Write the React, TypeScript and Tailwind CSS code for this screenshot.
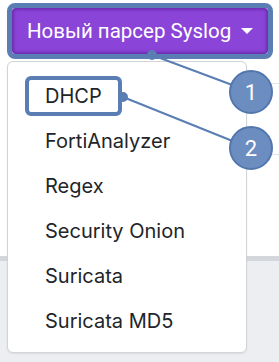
const items = ["DHCP", "FortiAnalyzer", "Regex", "Security Onion", "Suricata", "Suricata MD5"];

export default function App() {
  return (
    <div className="relative w-[279px] h-[362px] overflow-hidden bg-white font-['Inter',sans-serif]">
      {/* page behind */}
      <div className="flex flex-col h-full">
        <div className="h-[256px] flex flex-col">
          <div className="h-[84px] border-b border-[#e3e5e8] ml-[246px]" />
          <div className="h-[71px] border-b border-[#e3e5e8] ml-[246px]" />
        </div>
        <div className="flex-1 border-t-[5px] border-[#d3d6da] bg-[#eceef2]" />
      </div>

      {/* button */}
      <div className="absolute left-[7px] top-[3px] rounded-[8px] border-[5px] border-[#5a7eb3]">
        <button className="flex items-center h-[46px] w-[256px] pl-[15px] pr-[12px] rounded-[4px] bg-[#8b44d8] text-white text-[20.5px] font-['Roboto',sans-serif] shadow-[inset_0_0_3px_2px_rgba(90,30,150,0.6)]">
          <span>Новый парсер Syslog</span>
          <span className="ml-[10px] border-x-[6px] border-x-transparent border-t-[6px] border-t-white" />
        </button>
      </div>

      {/* menu */}
      <div className="absolute left-[7px] top-[61px] w-[240px] h-[292px] rounded-[6px] border border-[#d2d4d7] bg-white pt-[11px] shadow-[0_1px_2px_rgba(0,0,0,0.08)]">
        {items.map((t) => (
          <div key={t} className="h-[45px] flex items-center pl-[37px] text-[20px] text-[#212529]">
            {t}
          </div>
        ))}
        <div className="absolute left-[17px] top-[14px] w-[97px] h-[40px] rounded-[6px] border-[4px] border-[#5a7eb3]" />
      </div>

      {/* annotations */}
      <svg className="absolute inset-0" width="279" height="362">
        <line x1="152" y1="55" x2="235" y2="86" stroke="#5a7eb3" strokeWidth="2" />
        <line x1="123" y1="97" x2="235" y2="142" stroke="#5a7eb3" strokeWidth="2" />
        <circle cx="152" cy="55" r="5" fill="#5a7eb3" />
        <circle cx="123" cy="97" r="5" fill="#5a7eb3" />
        <circle cx="251" cy="92" r="21" fill="#6b8dc0" stroke="#5276ad" strokeWidth="2" />
        <circle cx="251" cy="148" r="21" fill="#6b8dc0" stroke="#5276ad" strokeWidth="2" />
        <text x="251" y="100" textAnchor="middle" fill="white" fontSize="22" fontFamily="Roboto, sans-serif">1</text>
        <text x="251" y="156" textAnchor="middle" fill="white" fontSize="22" fontFamily="Roboto, sans-serif">2</text>
      </svg>
    </div>
  );
}
